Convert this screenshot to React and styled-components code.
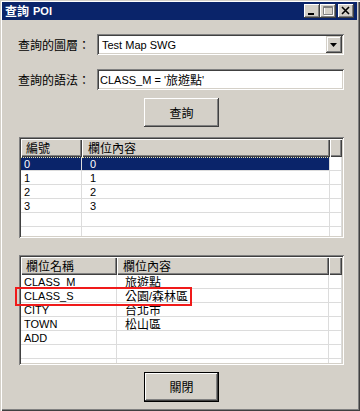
import React from 'react';
import styled, { createGlobalStyle } from 'styled-components';

const Global = createGlobalStyle`
  html, body { margin: 0; padding: 0; background: #d4d0c8; }
  body {
    font-family: "Liberation Sans", "Noto Sans CJK TC", sans-serif;
    font-size: 11px;
    color: #000;
  }
  * { box-sizing: border-box; }
`;

const Zh = styled.span`
  font-family: "Noto Sans CJK TC", sans-serif;
  font-size: 12px;
  line-height: 12px;
`;

const Window = styled.div`
  position: relative;
  width: 360px;
  height: 411px;
  background: #d4d0c8;
  padding: 2px 3px 3px 2px;
  box-shadow: inset 1px 1px #d4d0c8, inset 2px 2px #ffffff,
    inset -1px -1px #404040, inset -2px -2px #808080;
  display: flex;
  flex-direction: column;
`;

const TitleBar = styled.div`
  height: 18px;
  background: #0a246a;
  color: #fff;
  display: flex;
  align-items: center;
  padding: 0 3px 0 3px;
  font-weight: bold;
`;

const TitleText = styled.div`
  flex: 1;
  display: flex;
  align-items: center;
  gap: 4px;
  line-height: 16px;
`;

const CaptionButtons = styled.div`
  display: flex;
  align-items: center;
`;

const CaptionButton = styled.div`
  width: 16px;
  height: 14px;
  background: #d4d0c8;
  margin-left: ${p => p.$gap || 0}px;
  box-shadow: inset -1px -1px #404040, inset 1px 1px #ffffff,
    inset -2px -2px #808080, inset 2px 2px #d4d0c8;
  display: flex;
  svg { display: block; }
`;

const Content = styled.div`
  flex: 1;
  display: flex;
  flex-direction: column;
  padding: 0 13px 0 16px;
`;

const FormRow = styled.div`
  display: grid;
  grid-template-columns: 79px 1fr;
  align-items: center;
  margin-top: 14px;
  height: 21px;
`;

const Label = styled.div`
  display: flex;
  align-items: center;
`;

const Field = styled.div`
  height: 21px;
  background: #fff;
  box-shadow: inset 1px 1px #808080, inset -1px -1px #ffffff,
    inset 2px 2px #404040, inset -2px -2px #d4d0c8;
  display: flex;
  align-items: center;
  padding: 2px 2px 2px ${p => p.$pad}px;
  white-space: nowrap;
`;

const FieldText = styled.div`
  flex: 1;
  display: flex;
  align-items: center;
`;

const DropButton = styled.div`
  width: 16px;
  height: 17px;
  background: #d4d0c8;
  box-shadow: inset -1px -1px #404040, inset 1px 1px #d4d0c8,
    inset -2px -2px #808080, inset 2px 2px #ffffff;
  svg { display: block; }
`;

const PushButton = styled.div`
  align-self: center;
  width: 75px;
  height: ${p => p.$h}px;
  margin-top: ${p => p.$mt}px;
  margin-left: 1px;
  background: #d4d0c8;
  display: flex;
  align-items: center;
  justify-content: center;
  box-shadow: ${p =>
    p.$default
      ? 'inset 0 0 0 1px #000, inset -2px -2px #404040, inset 2px 2px #ffffff, inset -3px -3px #808080'
      : 'inset -1px -1px #404040, inset 1px 1px #ffffff, inset -2px -2px #808080, inset 2px 2px #d4d0c8'};
`;

const ListView = styled.div`
  position: relative;
  margin-top: ${p => p.$mt}px;
  margin-left: 1px;
  height: ${p => p.$h}px;
  background: #fff;
  padding: 2px;
  box-shadow: inset 1px 1px #808080, inset -1px -1px #ffffff,
    inset 2px 2px #404040, inset -2px -2px #d4d0c8;
`;

const ListInner = styled.div`
  height: 100%;
  overflow: hidden;
`;

const Row = styled.div`
  display: grid;
  grid-template-columns: ${p => p.$cols};
`;

const HeaderCell = styled.div`
  height: 18px;
  background: #d4d0c8;
  padding-left: ${p => p.$pad}px;
  display: flex;
  align-items: center;
  box-shadow: inset 1px 1px #ffffff, inset -1px -1px #404040,
    inset -2px -2px #808080;
  white-space: nowrap;
  overflow: hidden;
`;

const Cell = styled.div`
  height: 14px;
  padding-left: ${p => p.$pad}px;
  display: flex;
  align-items: center;
  white-space: nowrap;
  border-right: 1px solid #dcdcdc;
  border-bottom: 1px solid #dcdcdc;
  line-height: 12px;
  background: ${p => (p.$sel ? '#0a246a' : '#fff')};
  color: ${p => (p.$sel ? '#fff' : '#000')};
  border-top: ${p => (p.$sel ? '1px dotted #e8e4b0' : '0')};
`;

const Highlight = styled.div`
  position: absolute;
  left: -4px;
  top: 32px;
  width: 177px;
  height: 19px;
  border: 2px solid #f01a1a;
  pointer-events: none;
`;

const isCjk = s => /[\u3000-\u9fff\uff00-\uffef]/.test(s);

function Txt({ children }) {
  if (!children) return null;
  const parts = children.split(/([\u3000-\u9fff\uff00-\uffef]+)/).filter(Boolean);
  return parts.map((p, i) => (isCjk(p) ? <Zh key={i}>{p}</Zh> : <span key={i}>{p}</span>));
}

function List({ mt, h, cols, headers, rows, selected, children }) {
  return (
    <ListView $mt={mt} $h={h}>
      <ListInner>
        <Row $cols={cols}>
          {headers.map((t, i) => (
            <HeaderCell key={i} $pad={i === 0 ? 5 : 6}>
              <Txt>{t}</Txt>
            </HeaderCell>
          ))}
          <HeaderCell $pad={0} />
        </Row>
        {rows.map((r, ri) => (
          <Row key={ri} $cols={cols}>
            {r.map((t, ci) => (
              <Cell key={ci} $pad={ci === 0 ? 3 : 8} $sel={selected === ri}>
                <Txt>{t}</Txt>
              </Cell>
            ))}
            <Cell $pad={0} />
          </Row>
        ))}
      </ListInner>
      {children}
    </ListView>
  );
}

export default function App() {
  return (
    <>
      <Global />
      <Window>
        <TitleBar>
          <TitleText>
            <Zh>查詢</Zh>
            <span>POI</span>
          </TitleText>
          <CaptionButtons>
            <CaptionButton>
              <svg width="16" height="14" viewBox="0 0 16 14">
                <rect x="4" y="9" width="6" height="2" fill="#000" />
              </svg>
            </CaptionButton>
            <CaptionButton>
              <svg width="16" height="14" viewBox="0 0 16 14">
                <path d="M4.5 3.5h9v8h-9z" fill="none" stroke="#fff" />
                <rect x="4" y="3" width="9" height="1" fill="#fff" />
                <path d="M3.5 2.5h9v8h-9z" fill="none" stroke="#808080" />
                <rect x="3" y="3" width="9" height="1" fill="#808080" />
              </svg>
            </CaptionButton>
            <CaptionButton $gap={2}>
              <svg width="16" height="14" viewBox="0 0 16 14">
                <path d="M4 3l7 7M11 3l-7 7" stroke="#000" strokeWidth="1.6" />
              </svg>
            </CaptionButton>
          </CaptionButtons>
        </TitleBar>
        <Content>
          <FormRow>
            <Label><Zh>查詢的圖層：</Zh></Label>
            <Field $pad={5}>
              <FieldText>Test Map SWG</FieldText>
              <DropButton>
                <svg width="16" height="17" viewBox="0 0 16 17">
                  <path d="M4 7h7l-3.5 4z" fill="#000" />
                </svg>
              </DropButton>
            </Field>
          </FormRow>
          <FormRow>
            <Label><Zh>查詢的語法：</Zh></Label>
            <Field $pad={3}>
              <FieldText>
                <span>CLASS_M = '</span>
                <Zh>旅遊點</Zh>
                <span>'</span>
              </FieldText>
            </Field>
          </FormRow>
          <PushButton $h={29} $mt={8}>
            <Zh>查詢</Zh>
          </PushButton>
          <List
            mt={10}
            h={101}
            cols="61px 248px 1fr"
            headers={['編號', '欄位內容']}
            selected={0}
            rows={[
              ['0', '0'],
              ['1', '1'],
              ['2', '2'],
              ['3', '3'],
              ['', ''],
              ['', ''],
            ]}
          />
          <List
            mt={17}
            h={110}
            cols="96px 212px 1fr"
            headers={['欄位名稱', '欄位內容']}
            rows={[
              ['CLASS_M', '旅遊點'],
              ['CLASS_S', '公園/森林區'],
              ['CITY', '台北市'],
              ['TOWN', '松山區'],
              ['ADD', ''],
              ['', ''],
              ['', ''],
            ]}
          >
            <Highlight />
          </List>
          <PushButton $h={30} $mt={7} $default>
            <Zh>關閉</Zh>
          </PushButton>
        </Content>
      </Window>
    </>
  );
}
